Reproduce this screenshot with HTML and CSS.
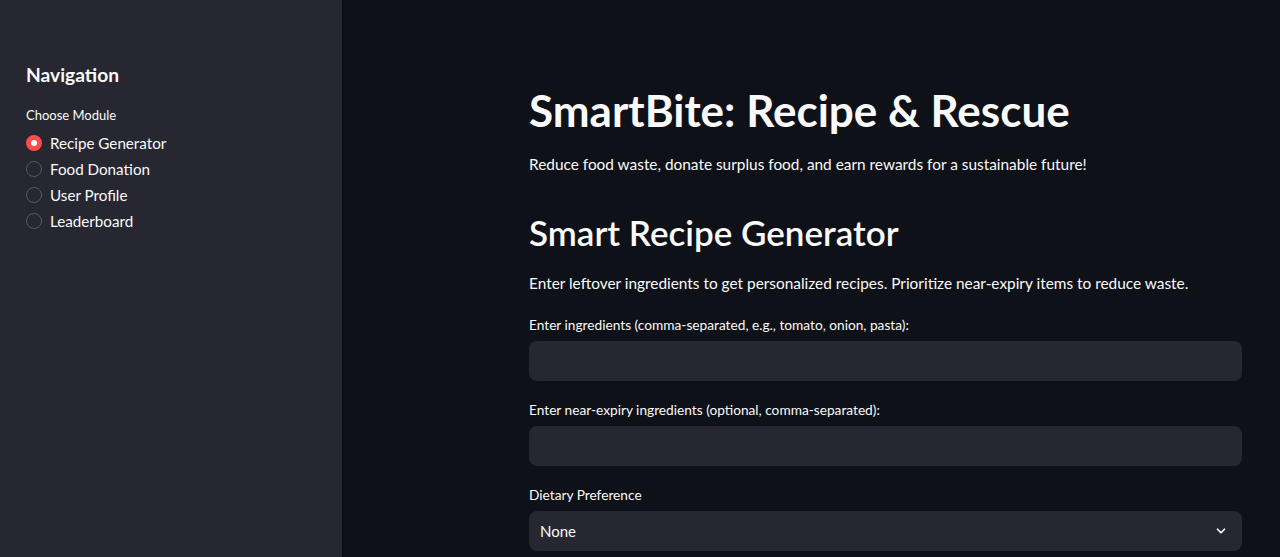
FILE: index.html
```html
<!DOCTYPE html>
<html>
<head>
<meta charset="utf-8">
<link rel="stylesheet" href="styles.css">
</head>
<body>
<div class="app">
  <aside class="sidebar">
    <h2 class="nav-title">Navigation</h2>
    <div class="radio-label">Choose Module</div>
    <div class="radio-group">
      <div class="radio-item"><span class="dot checked"></span><span>Recipe Generator</span></div>
      <div class="radio-item"><span class="dot"></span><span>Food Donation</span></div>
      <div class="radio-item"><span class="dot"></span><span>User Profile</span></div>
      <div class="radio-item"><span class="dot"></span><span>Leaderboard</span></div>
    </div>
  </aside>
  <main class="main">
    <div class="block">
      <h1 class="title">SmartBite: Recipe &amp; Rescue</h1>
      <p class="lead">Reduce food waste, donate surplus food, and earn rewards for a sustainable future!</p>
      <h2 class="section">Smart Recipe Generator</h2>
      <p class="desc">Enter leftover ingredients to get personalized recipes. Prioritize near-expiry items to reduce waste.</p>
      <div class="field">
        <label class="flabel">Enter ingredients (comma-separated, e.g., tomato, onion, pasta):</label>
        <div class="input"></div>
      </div>
      <div class="field">
        <label class="flabel">Enter near-expiry ingredients (optional, comma-separated):</label>
        <div class="input"></div>
      </div>
      <div class="field">
        <label class="flabel">Dietary Preference</label>
        <div class="input select"><span>None</span>
          <svg class="chev" width="14" height="14" viewBox="0 0 24 24"><path d="M6 9l6 6 6-6" fill="none" stroke="#fafafa" stroke-width="3" stroke-linecap="round" stroke-linejoin="round"/></svg>
        </div>
      </div>
    </div>
  </main>
</div>
</body>
</html>
```

FILE: styles.css
```css
* { box-sizing: border-box; }
html, body { margin: 0; padding: 0; height: 100%; }
body {
  background: #0e1117;
  color: #fafafa;
  font-family: "Lato", "Noto Sans", sans-serif;
  overflow: hidden;
}
.app { display: flex; height: 557px; }
.sidebar {
  width: 342px;
  flex-shrink: 0;
  background: #262730;
  padding: 62px 26px 0 26px;
}
.nav-title {
  margin: 0;
  font-size: 19.2px;
  font-weight: 700;
  line-height: 26px;
}
.radio-label {
  margin-top: 18px;
  font-size: 13px;
  line-height: 18px;
}
.radio-group { margin-top: 6px; display: flex; flex-direction: column; }
.radio-item {
  display: flex;
  align-items: center;
  gap: 8px;
  height: 26px;
  font-size: 15.2px;
}
.dot {
  width: 16px; height: 16px;
  border-radius: 50%;
  border: 1.5px solid #565863;
  background: #262730;
  flex-shrink: 0;
}
.dot.checked {
  border: 5px solid #ff4b4b;
  background: #fff;
}
.main { flex: 1; padding: 88px 38px 0 187px; }
.block { width: 713px; }
.title {
  margin: 0;
  font-size: 44px;
  font-weight: 700;
  line-height: 44px;
}
.lead {
  margin: 20px 0 0 0;
  font-size: 15.4px;
  line-height: 24px;
}
.section {
  margin: 34px 0 0 0;
  font-size: 35px;
  font-weight: 600;
  line-height: 44px;
}
.desc {
  margin: 17px 0 0 0;
  font-size: 15.4px;
  line-height: 24px;
}
.field { margin-top: 21px; }
.field + .field { margin-top: 20px; }
.flabel {
  display: block;
  font-size: 13.7px;
  line-height: 18px;
  margin-bottom: 7px;
}
.input {
  height: 40px;
  background: #262730;
  border-radius: 8px;
}
.select {
  display: flex;
  align-items: center;
  justify-content: space-between;
  padding: 0 14px 0 11px;
  font-size: 15px;
}
```
